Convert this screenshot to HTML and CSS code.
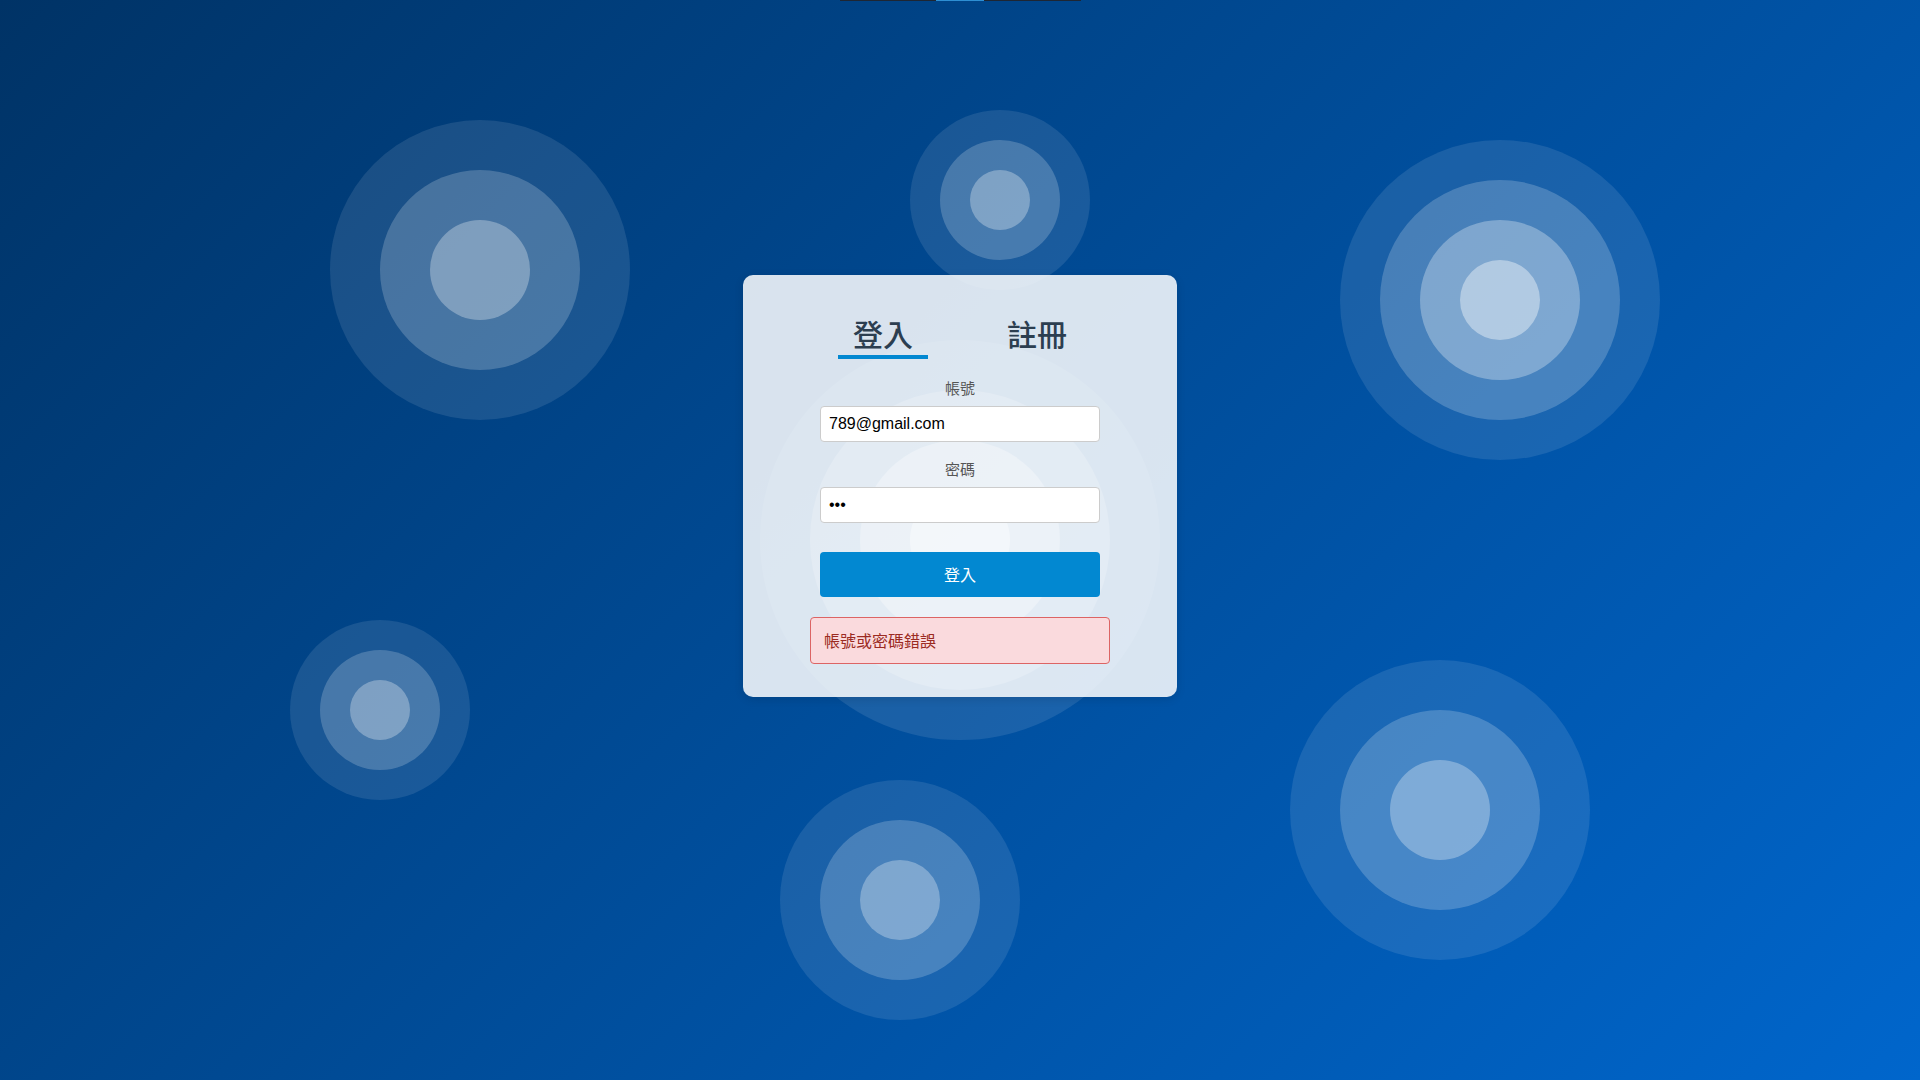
FILE: index.html
```html
<!DOCTYPE html>
<html lang="zh-Hant">
<head>
<meta charset="utf-8">
<title>登入</title>
<link rel="stylesheet" href="styles.css">
</head>
<body>
<div class="topbar"><span class="seg"></span></div>
<div class="bg">
  <div class="ripple a1 w50 c1"><div class="ring a2"><div class="core a3"></div></div></div>
  <div class="ripple a1 w30 c2"><div class="ring a2"><div class="core a3"></div></div></div>
  <div class="ripple a1 w40 c3"><div class="ring a2"><div class="ring a3"><div class="core a4"></div></div></div></div>
  <div class="ripple a1 w30 c4"><div class="ring a2"><div class="core a3"></div></div></div>
  <div class="ripple a1 w40 c5"><div class="ring a2"><div class="core a3"></div></div></div>
  <div class="ripple a1 w50 c6"><div class="ring a2"><div class="core a3"></div></div></div>
  <div class="ripple a1 w50 c7"><div class="ring a2"><div class="ring a3"><div class="core a4"></div></div></div></div>
</div>
<main class="stage">
  <div class="card">
    <div class="tabs">
      <div class="tab active">登入</div>
      <div class="tab">註冊</div>
    </div>
    <form class="form">
      <label class="label">帳號</label>
      <input class="input" type="text" value="789@gmail.com">
      <label class="label">密碼</label>
      <input class="input" type="password" value="123">
      <button class="btn" type="button">登入</button>
    </form>
    <div class="error">帳號或密碼錯誤</div>
  </div>
</main>
</body>
</html>
```

FILE: styles.css
```css
html, body {
  margin: 0;
  padding: 0;
  height: 100%;
}
body {
  position: relative;
  overflow: hidden;
  font-family: "Liberation Sans", "Noto Sans CJK TC", sans-serif;
  background: linear-gradient(135deg, #003366 0%, #0066cc 100%);
}
.topbar {
  position: relative;
  z-index: 2;
  width: 241px;
  height: 1px;
  margin: 0 auto;
  background: #1e2633;
  display: flex;
  justify-content: center;
}
.topbar .seg {
  width: 48px;
  height: 1px;
  background: #2e8fd3;
}
.bg {
  position: absolute;
  inset: 0;
  z-index: 0;
}
.ripple {
  position: absolute;
  border-radius: 50%;
  display: flex;
}
.ring {
  border-radius: 50%;
  display: flex;
}
.core {
  border-radius: 50%;
}
.w30, .w30 .ring { padding: 30px; }
.w30 .core { width: 60px; height: 60px; }
.w40, .w40 .ring { padding: 40px; }
.w40 .core { width: 80px; height: 80px; }
.w50, .w50 .ring { padding: 50px; }
.w50 .core { width: 100px; height: 100px; }
.a1 { background: rgba(255, 255, 255, 0.1); }
.a2 { background: rgba(255, 255, 255, 0.2); }
.a3 { background: rgba(255, 255, 255, 0.3); }
.a4 { background: rgba(255, 255, 255, 0.4); }
.c1 { left: 330px; top: 120px; }
.c2 { left: 910px; top: 110px; }
.c3 { left: 1340px; top: 140px; }
.c4 { left: 290px; top: 620px; }
.c5 { left: 780px; top: 780px; }
.c6 { left: 1290px; top: 660px; }
.c7 { left: 760px; top: 340px; }

.stage {
  position: relative;
  z-index: 1;
  display: flex;
  justify-content: center;
  padding-top: 274px;
}
.card {
  width: 434px;
  box-sizing: border-box;
  padding: 38px 0 33px;
  background: rgba(255, 255, 255, 0.85);
  border-radius: 10px;
  box-shadow: 0 2px 10px rgba(0, 0, 0, 0.12);
  display: flex;
  flex-direction: column;
  align-items: center;
}
.tabs {
  display: flex;
  justify-content: center;
  gap: 64px;
  margin-bottom: 19px;
}
.tab {
  font-family: "Noto Sans CJK TC", sans-serif;
  font-size: 30px;
  font-weight: 500;
  line-height: 40px;
  color: #2c3e50;
  padding: 0 15px 2px;
  border-bottom: 4px solid transparent;
}
.tab.active {
  border-bottom-color: #0288d1;
}
.form {
  display: flex;
  flex-direction: column;
  align-items: center;
  margin: 0;
}
.label {
  font-family: "Noto Sans CJK TC", sans-serif;
  font-size: 15px;
  line-height: 19px;
  color: #555;
  margin-bottom: 9px;
}
.input {
  width: 280px;
  height: 36px;
  box-sizing: border-box;
  border: 1px solid #ccc;
  border-radius: 4px;
  padding: 0 8px;
  font-family: "Liberation Sans", sans-serif;
  font-size: 16px;
  color: #000;
  background: #fff;
  margin: 0 0 17px;
  outline: none;
}
.input[type="password"] {
  margin-bottom: 0;
}
.btn {
  width: 280px;
  height: 45px;
  margin-top: 29px;
  border: none;
  border-radius: 4px;
  background: #0288d1;
  color: #fff;
  font-family: "Noto Sans CJK TC", sans-serif;
  font-size: 16px;
  line-height: 43px;
  padding: 0;
}
.error {
  width: 300px;
  box-sizing: border-box;
  margin-top: 20px;
  padding: 12px 13px;
  line-height: 21px;
  font-family: "Noto Sans CJK TC", sans-serif;
  font-size: 16px;
  color: #9b2a22;
  background: #fadadd;
  border: 1px solid #dc6464;
  border-radius: 4px;
}
```
